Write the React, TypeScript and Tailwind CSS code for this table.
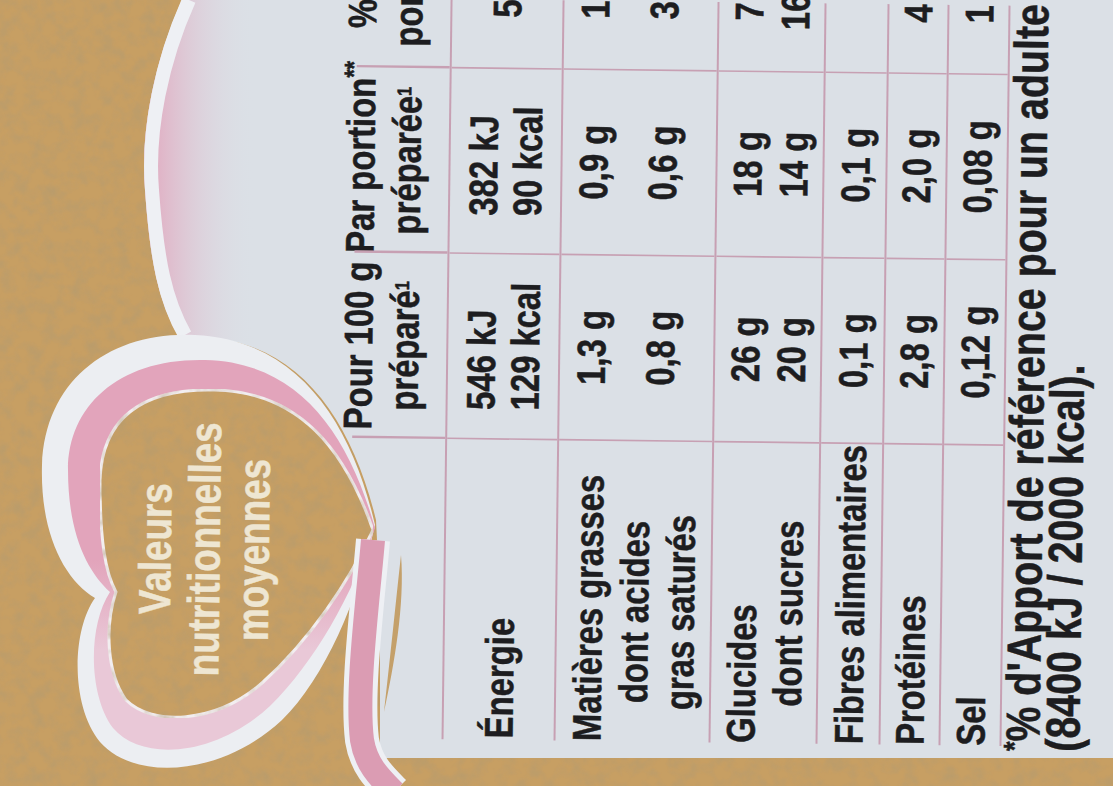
import type { ReactNode } from "react"

// The label is photographed sideways; the table is laid out upright and the
// whole block turned. Liberation Sans squeezed to 82% stands in for the narrow face.
const font = "font-['Liberation_Sans','Arial',sans-serif]"
const cols = "grid grid-cols-[366px_226px_226px_193px]"
const rule = "border-[#c7a0b3]"

function Cell({ children, first, className = "" }: { children?: ReactNode; first?: boolean; className?: string }) {
  return (
    <div className={`flex items-center ${first ? "" : `justify-center border-l-[2.5px] ${rule}`} ${className}`}>
      {children}
    </div>
  )
}

function HeadCell({ children, className = "" }: { children?: ReactNode; className?: string }) {
  return (
    <div className={`relative ${className}`}>
      <span className="absolute bottom-0 left-0 top-[18px] w-[2.5px] bg-[#c7a0b3]" />
      {children}
    </div>
  )
}

function Backdrop() {
  return (
    <svg className="absolute inset-0" width="1113" height="786" viewBox="0 0 1113 786">
      <defs>
        <filter id="paper" x="0" y="0" width="1" height="1">
          <feTurbulence type="fractalNoise" baseFrequency="0.07" numOctaves="3" seed="7" result="t" />
          <feColorMatrix
            in="t"
            type="matrix"
            values="0 0 0 0 0.45  0 0 0 0 0.33  0 0 0 0 0.16  1.3 0 0 0 -0.5"
            result="c"
          />
          <feComposite in="c" in2="SourceGraphic" operator="in" result="m" />
          <feMerge>
            <feMergeNode in="SourceGraphic" />
            <feMergeNode in="m" />
          </feMerge>
        </filter>
        <linearGradient id="edge" gradientUnits="userSpaceOnUse" x1="150" y1="0" x2="255" y2="0">
          <stop offset="0" stopColor="#e2a6bd" stopOpacity="0.9" />
          <stop offset="1" stopColor="#dbe0e6" stopOpacity="0" />
        </linearGradient>
        <linearGradient id="rib" gradientUnits="userSpaceOnUse" x1="0" y1="560" x2="0" y2="650">
          <stop offset="0" stopColor="#e2a4bb" />
          <stop offset="1" stopColor="#e9c8d7" />
        </linearGradient>
      </defs>

      <rect width="1113" height="786" fill="#c79f63" filter="url(#paper)" />

      {/* light panel behind the table */}
      <path
        d="M182,0 C155,60 140,130 145,190 C150,260 158,300 178,335 L210,338 C300,345 352,420 376,520 L380,600 L380,758 L1113,758 L1113,0 Z"
        fill="#dbe0e6"
      />
      <path d="M182,0 C155,60 140,130 145,190 C150,260 158,300 178,335 L280,345 L290,0 Z" fill="url(#edge)" />
      <path
        d="M182,0 C155,60 140,130 145,190 C150,260 158,300 178,335"
        transform="translate(7,0)"
        stroke="#eef0f4"
        strokeWidth="14"
        fill="none"
      />

      {/* heart ribbon */}
      <path
        d="M375,525 C352,425 300,340 195,335 C110,331 45,380 42,465 C40,535 65,580 95,598 C72,630 70,705 100,742 C135,782 222,776 282,720 C325,678 358,600 375,525 Z"
        fill="#eceef2"
      />
      <path
        d="M375,528 C348,432 298,362 205,360 C120,358 68,405 68,470 C68,535 88,572 110,592 C88,625 88,695 113,728 C142,762 215,757 270,706 C314,663 352,596 375,528 Z"
        fill="url(#rib)"
      />
      <path
        d="M373,530 C345,450 300,392 215,390 C140,388 102,420 100,480 C100,540 105,572 116,592 C105,625 106,672 126,700 C152,726 215,724 262,683 C310,640 350,580 373,530 Z"
        fill="#c79f63"
        stroke="#f2eef0"
        strokeWidth="3"
        filter="url(#paper)"
      />
      <path d="M373,540 C368,600 356,690 362,740 C366,765 380,778 394,792" stroke="#eef0f4" strokeWidth="34" fill="none" />
      <path d="M373,540 C368,600 356,690 362,740 C366,765 380,778 394,792" stroke="#db9cb3" strokeWidth="24" fill="none" />
      <path d="M401,555 C396,600 390,660 384,712 C394,665 405,605 401,555 Z" fill="#c4a06a" />
    </svg>
  )
}

export default function App() {
  return (
    <div className="relative h-[786px] w-[1113px] overflow-hidden bg-[#c79f63]">
      <Backdrop />

      <div
        className={`absolute left-[77.25px] top-[-163.5px] h-[1113px] w-[958.5px] rotate-[-89.3deg] scale-x-[0.82] ${font} whitespace-nowrap text-[40px] font-bold leading-[46px] text-[#1d1d20] [-webkit-text-stroke:0.5px_#1d1d20]`}
      >
        {/* title inside the heart */}
        <div className="h-[335px]">
          <div className="flex w-[568px] flex-col items-center pt-[133px] text-[45px] leading-[49px] text-[#eee6d2] [-webkit-text-stroke:0.5px_#eee6d2]">
            <span>Valeurs</span>
            <span>nutritionnelles</span>
            <span>moyennes</span>
          </div>
        </div>

        <div className="ml-[56px]">
          <div className={`${cols} h-[113px] border-b-2 ${rule}`}>
            <div />
            <HeadCell className="text-center">
              Pour 100 g
              <br />
              préparé<sup className="text-[20px]">1</sup>
            </HeadCell>
            <HeadCell className="text-center">
              Par portion<sup className="text-[26px]">**</sup>
              <br />
              préparée<sup className="text-[20px]">1</sup>
            </HeadCell>
            <HeadCell>
              <div className="pl-[48px]">
                %<sup className="text-[26px]">*</sup> AR
              </div>
              <div className="pl-[26px]">portion</div>
            </HeadCell>
          </div>

          <div className={`${cols} h-[112px] border-b-2 ${rule}`}>
            <Cell first className="pl-[2px]">Énergie</Cell>
            <Cell>
              <div className="text-left leading-[44px]">
                546 kJ
                <br />
                129 kcal
              </div>
            </Cell>
            <Cell>
              <div className="text-left leading-[44px]">
                382 kJ
                <br />
                90 kcal
              </div>
            </Cell>
            <Cell>5 %</Cell>
          </div>

          <div className={`${cols} h-[155px] border-b-2 ${rule}`}>
            <Cell first>
              <div>
                <div>Matières grasses</div>
                <div className="ml-[39px] inline-block text-center">
                  dont acides
                  <br />
                  gras saturés
                </div>
              </div>
            </Cell>
            {[
              ["1,3 g", "0,8 g"],
              ["0,9 g", "0,6 g"],
              ["1 %", "3 %"],
            ].map(([a, b]) => (
              <Cell key={a + b}>
                <div className="flex flex-col items-center">
                  <div className="h-[46px]">{a}</div>
                  <div className="flex h-[92px] items-center">{b}</div>
                </div>
              </Cell>
            ))}
          </div>

          <div className={`${cols} h-[107px] border-b-2 ${rule}`}>
            <Cell first>
              <div>
                <div>Glucides</div>
                <div className="pl-[45px]">dont sucres</div>
              </div>
            </Cell>
            {[
              ["26 g", "20 g"],
              ["18 g", "14 g"],
              ["7 %", "16 %"],
            ].map(([a, b]) => (
              <Cell key={a + b}>
                <div className="text-center">
                  {a}
                  <br />
                  {b}
                </div>
              </Cell>
            ))}
          </div>

          {[
            ["Fibres alimentaires", "0,1 g", "0,1 g", "", "h-[63px]"],
            ["Protéines", "2,8 g", "2,0 g", "4 %", "h-[60px]"],
            ["Sel", "0,12 g", "0,08 g", "1 %", "h-[61px]"],
          ].map(([label, a, b, p, h]) => (
            <div key={label} className={`${cols} ${h} border-b-2 ${rule}`}>
              <Cell first>{label}</Cell>
              <Cell>{a}</Cell>
              <Cell>{b}</Cell>
              <Cell>{p}</Cell>
            </div>
          ))}
        </div>

        <div className="ml-[50px] mt-[2px] text-[48px] leading-[40px]">
          <sup className="text-[30px]">*</sup>% d'Apport de référence pour un adulte
          <br />
          (8400 kJ / 2000 kcal).
        </div>
      </div>
    </div>
  )
}
